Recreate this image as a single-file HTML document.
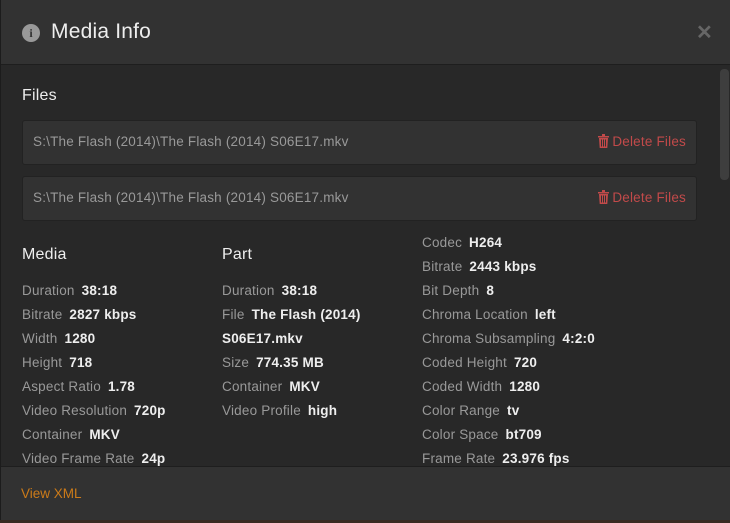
<!DOCTYPE html>
<html><head><style>
*{margin:0;padding:0;box-sizing:border-box}
body{width:730px;height:523px;background:#3a2a22;font-family:"Liberation Sans",sans-serif;overflow:hidden;position:relative}
.m{position:absolute;left:0;top:0;width:730px;height:520px;background:#282828;border-left:1px solid #1c1c1c}
.hd{position:absolute;left:0;top:0;width:730px;height:65px;background:#323232;border-bottom:1px solid #1e1e1e}
.ic{position:absolute;left:21px;top:24px;width:18px;height:18px;border-radius:50%;background:#999;color:#323232;font:bold 12px "Liberation Serif",serif;text-align:center;line-height:18px}
.tt{position:absolute;left:50px;top:20px;font-size:21px;color:#eee;letter-spacing:0.2px}
.x{position:absolute;left:695px;top:20px;color:#666;font:bold 20px "Liberation Sans",sans-serif}
.h{position:absolute;font-size:16px;color:#eee;letter-spacing:0.2px}
.f{position:absolute;left:21px;width:675px;height:45px;background:#323232;border:1px solid #222;border-radius:3px;font-size:13.5px;color:#999;padding:13px 10px;letter-spacing:0.2px}
.d{position:absolute;right:10px;top:13px;color:#c24a4a}
.d svg{vertical-align:-2px;margin-right:3px}
.col{position:absolute;font-size:13.5px;color:#999;line-height:24px;letter-spacing:0.2px}
.col b{color:#eee;margin-left:7px}
.sb{position:absolute;left:719px;top:69px;width:9px;height:111px;background:#3e3e3e;border-radius:4px}
.ft{position:absolute;left:0;top:466px;width:730px;height:54px;background:#323232;border-top:1px solid #1e1e1e}
.ft span{position:absolute;left:20px;top:19px;font-size:13.5px;color:#cc7b19}
</style></head><body>
<div class="m">
<div class="hd"><div class="ic">i</div><div class="tt">Media Info</div><div class="x">✕</div></div>
<div class="h" style="left:21px;top:87px">Files</div>
<div class="f" style="top:120px">S:\The Flash (2014)\The Flash (2014) S06E17.mkv<span class="d"><svg width="11" height="14" viewBox="0 0 11 14"><path d="M0 2h11v1.5H0zM4 0h3v2H4zM1 4h9l-.7 10H1.7zM3 5.5v7h1v-7zM5 5.5v7h1v-7zM7 5.5v7h1v-7z" fill="#c24a4a" fill-rule="evenodd"/></svg>Delete Files</span></div>
<div class="f" style="top:176px">S:\The Flash (2014)\The Flash (2014) S06E17.mkv<span class="d"><svg width="11" height="14" viewBox="0 0 11 14"><path d="M0 2h11v1.5H0zM4 0h3v2H4zM1 4h9l-.7 10H1.7zM3 5.5v7h1v-7zM5 5.5v7h1v-7zM7 5.5v7h1v-7z" fill="#c24a4a" fill-rule="evenodd"/></svg>Delete Files</span></div>
<div class="h" style="left:21px;top:246px">Media</div>
<div class="h" style="left:221px;top:246px">Part</div>
<div class="col" style="left:21px;top:279px">Duration<b>38:18</b><br>Bitrate<b>2827 kbps</b><br>Width<b>1280</b><br>Height<b>718</b><br>Aspect Ratio<b>1.78</b><br>Video Resolution<b>720p</b><br>Container<b>MKV</b><br>Video Frame Rate<b>24p</b></div>
<div class="col" style="left:221px;top:279px">Duration<b>38:18</b><br>File<b>The Flash (2014)</b><br><b style="margin:0">S06E17.mkv</b><br>Size<b>774.35 MB</b><br>Container<b>MKV</b><br>Video Profile<b>high</b></div>
<div class="col" style="left:421px;top:231px">Codec<b>H264</b><br>Bitrate<b>2443 kbps</b><br>Bit Depth<b>8</b><br>Chroma Location<b>left</b><br>Chroma Subsampling<b>4:2:0</b><br>Coded Height<b>720</b><br>Coded Width<b>1280</b><br>Color Range<b>tv</b><br>Color Space<b>bt709</b><br>Frame Rate<b>23.976 fps</b></div>
<div class="sb"></div>
<div class="ft"><span>View XML</span></div>
</div>
</body></html>
